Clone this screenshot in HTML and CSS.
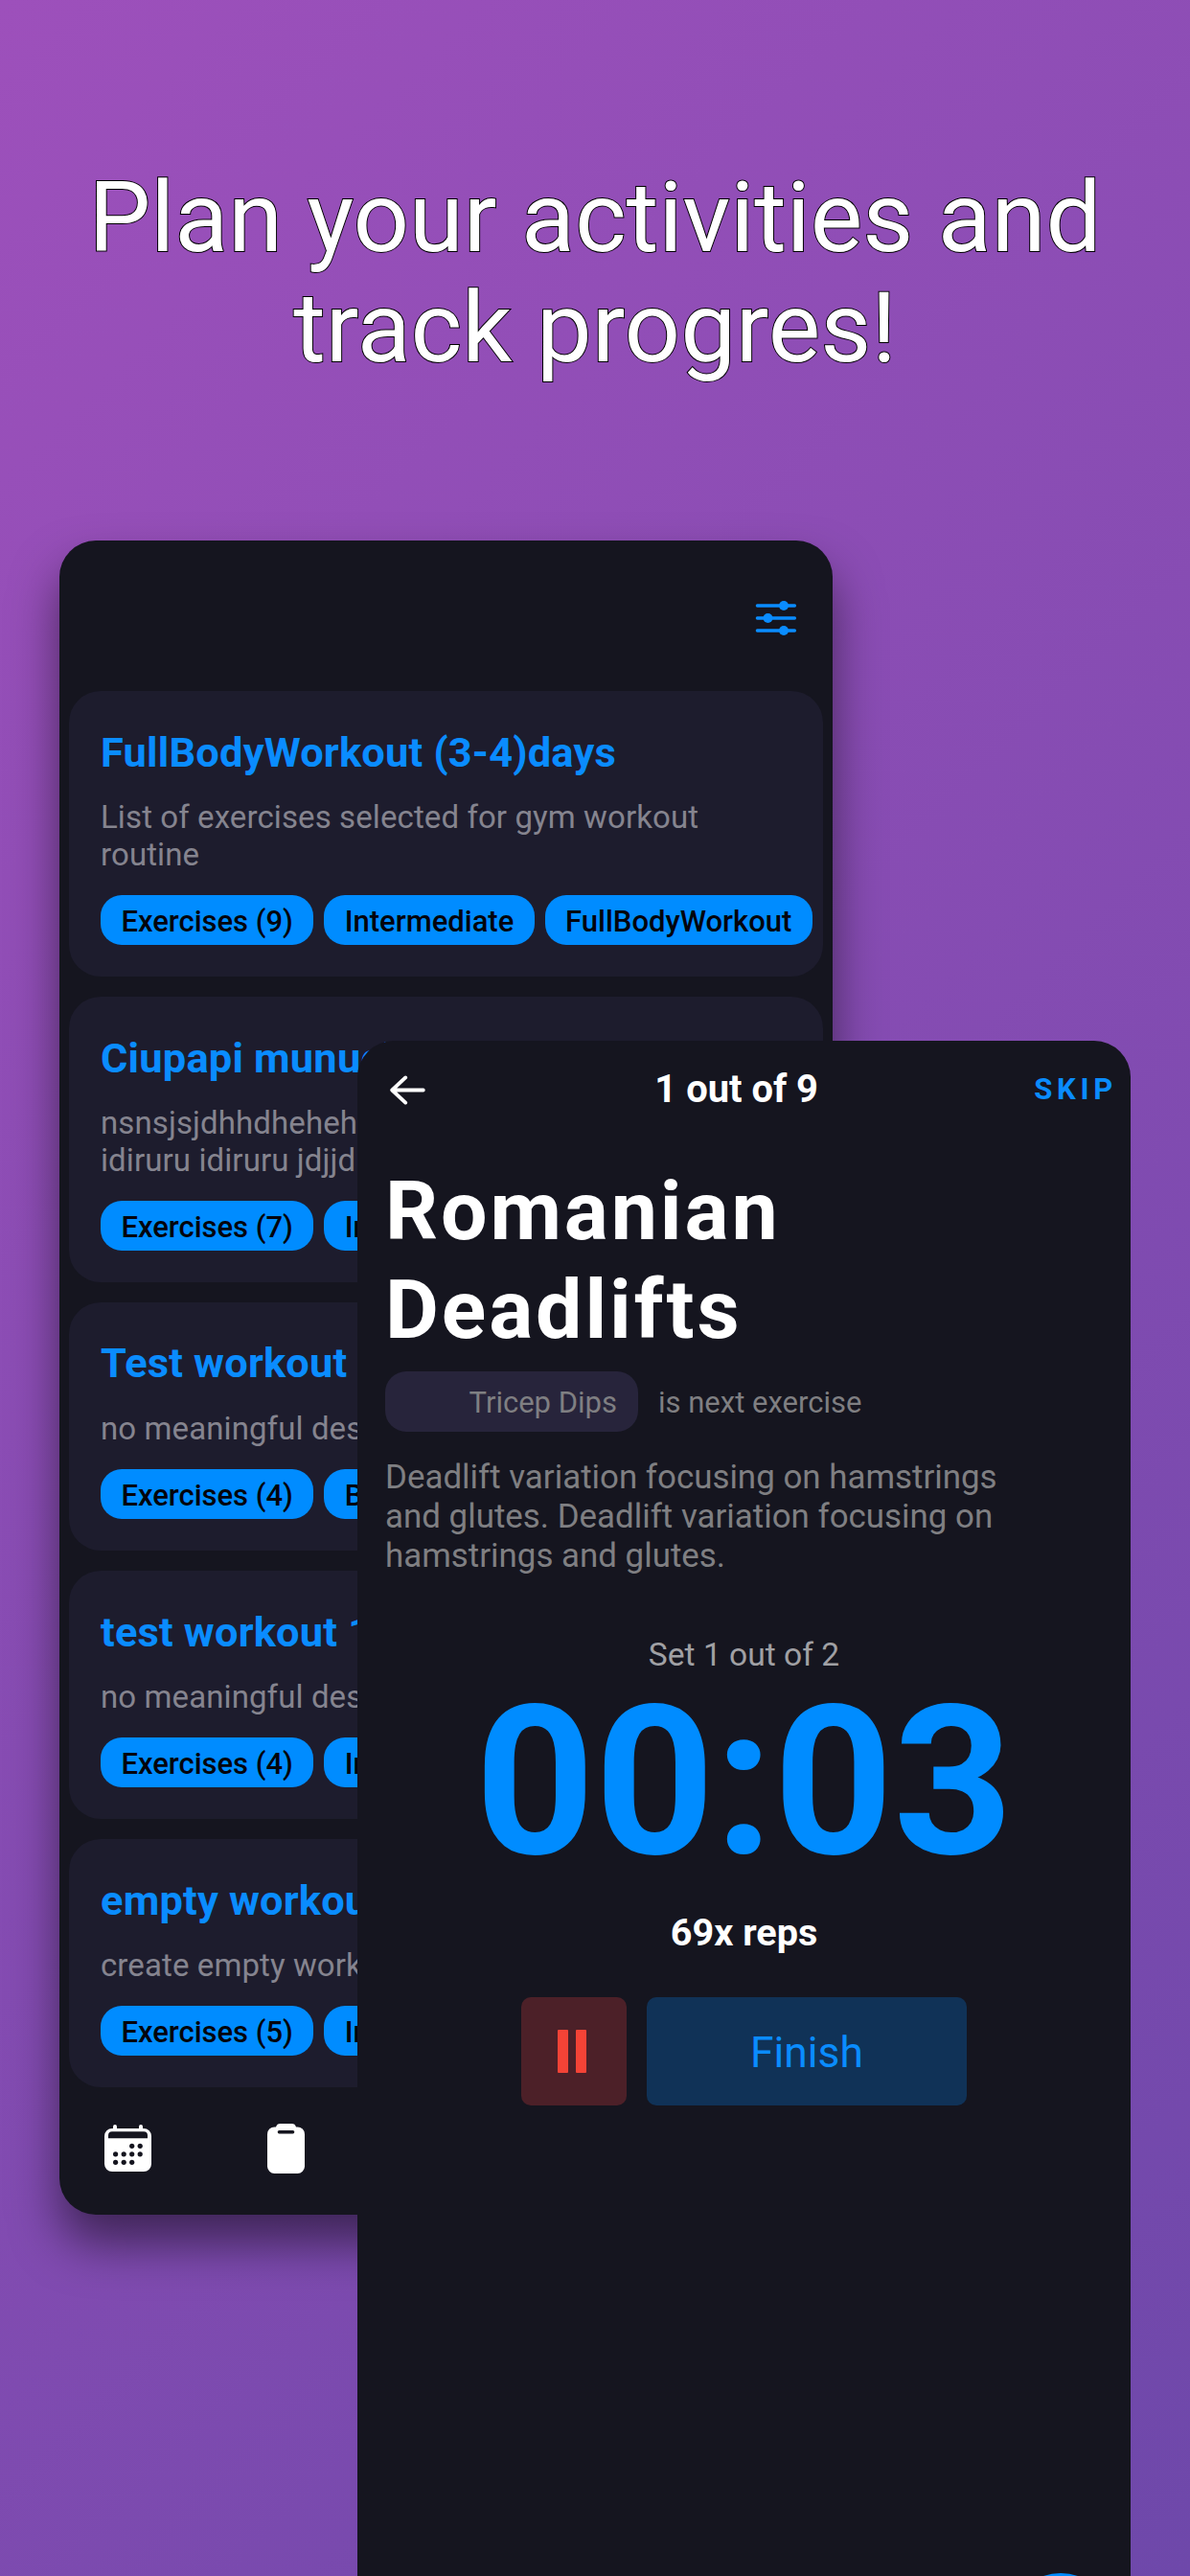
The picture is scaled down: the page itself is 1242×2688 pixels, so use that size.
FILE: index.html
```html
<!DOCTYPE html>
<html lang="en">
<head>
<meta charset="utf-8">
<title>Plan your activities</title>
<link rel="stylesheet" href="styles.css">
</head>
<body>
<main class="stage">
  <h1 class="headline">Plan your activities and<br>track progres!</h1>

  <section class="phone phone-list">
    <header class="list-header">
      <svg class="icon-filter" viewBox="0 0 44 38" fill="#0a8cff" stroke="#0a8cff">
        <path d="M2.4 6H41.4M2.4 19H41.4M2.4 32H41.4" stroke-width="3.4" stroke-linecap="round" fill="none"/>
        <g stroke="none"><circle cx="30" cy="6" r="5"/><circle cx="13.5" cy="19" r="5"/><circle cx="30" cy="32" r="5"/></g>
      </svg>
    </header>
    <div class="cards">
      <article class="card">
        <h2 class="card-title">FullBodyWorkout (3-4)days</h2>
        <p class="card-text">List of exercises selected for gym workout<br>routine</p>
        <div class="chips"><span class="chip">Exercises (9)</span><span class="chip">Intermediate</span><span class="chip">FullBodyWorkout</span></div>
      </article>
      <article class="card">
        <h2 class="card-title">Ciupapi munuch</h2>
        <p class="card-text">nsnsjsjdhhdheheh<br>idiruru idiruru jdjjdu</p>
        <div class="chips"><span class="chip">Exercises (7)</span><span class="chip">In</span></div>
      </article>
      <article class="card">
        <h2 class="card-title">Test workout</h2>
        <p class="card-text">no meaningful des</p>
        <div class="chips"><span class="chip">Exercises (4)</span><span class="chip">Be</span></div>
      </article>
      <article class="card">
        <h2 class="card-title">test workout 1</h2>
        <p class="card-text">no meaningful des</p>
        <div class="chips"><span class="chip">Exercises (4)</span><span class="chip">In</span></div>
      </article>
      <article class="card">
        <h2 class="card-title">empty workou</h2>
        <p class="card-text">create empty work</p>
        <div class="chips"><span class="chip">Exercises (5)</span><span class="chip">In</span></div>
      </article>
    </div>
    <nav class="tabbar">
      <svg class="icon-calendar" viewBox="0 0 49 50">
        <path fill="#fff" d="M9 4V2a2 2 0 0 1 4 0V4H36V2a2 2 0 0 1 4 0V4H41a8 8 0 0 1 8 8V41a8 8 0 0 1-8 8H8a8 8 0 0 1-8-8V12a8 8 0 0 1 8-8z"/>
        <path fill="#15151f" d="M8 7.3H41a4 4 0 0 1 4 4V14.3H4V11.3a4 4 0 0 1 4-4z"/>
        <g fill="#15151f"><circle cx="28.7" cy="22.3" r="2.6"/><circle cx="37.2" cy="22.3" r="2.6"/><circle cx="11.6" cy="30.8" r="2.6"/><circle cx="20.2" cy="30.8" r="2.6"/><circle cx="28.7" cy="30.8" r="2.6"/><circle cx="37.2" cy="30.8" r="2.6"/><circle cx="11.6" cy="39.3" r="2.6"/><circle cx="20.2" cy="39.3" r="2.6"/><circle cx="28.7" cy="39.3" r="2.6"/></g>
      </svg>
      <svg class="icon-clipboard" viewBox="0 0 39 52">
        <path fill="#fff" d="M13.5 0H25.5Q29 0 30 3.4H31.5a7.5 7.5 0 0 1 7.5 7.5V44.5a7.5 7.5 0 0 1-7.5 7.5H7.5A7.5 7.5 0 0 1 0 44.5V10.9A7.5 7.5 0 0 1 7.5 3.4H9Q10 0 13.5 0z"/>
        <path d="M12.4 8.8H26.6" stroke="#15151f" stroke-width="3.4" stroke-linecap="round"/>
      </svg>
    </nav>
  </section>

  <section class="phone phone-session">
    <header class="session-header">
      <svg class="icon-back" viewBox="0 0 37 31" fill="none" stroke="#fff" stroke-width="3.8" stroke-linecap="round" stroke-linejoin="round">
        <path d="M34.8 15.5H2.4M16.2 2.4L2.2 15.5L16.2 28.6"/>
      </svg>
      <span class="session-step">1 out of 9</span>
      <span class="skip">SKIP</span>
    </header>
    <h2 class="exercise-name">Romanian<br>Deadlifts</h2>
    <div class="next"><span class="next-pill">Tricep Dips</span><span class="next-note">is next exercise</span></div>
    <p class="exercise-text">Deadlift variation focusing on hamstrings<br>and glutes. Deadlift variation focusing on<br>hamstrings and glutes.</p>
    <div class="set">Set 1 out of 2</div>
    <div class="timer">00:03</div>
    <div class="reps">69x reps</div>
    <div class="actions">
      <span class="btn btn-pause"><i class="bar"></i><i class="bar"></i></span>
      <span class="btn btn-finish">Finish</span>
    </div>
    <span class="fab"></span>
  </section>
</main>
</body>
</html>
```
FILE: styles.css
```css
* { box-sizing: border-box; }

body {
  margin: 0;
  font-family: Roboto, "Noto Sans", sans-serif;
}

h1, h2, p { margin: 0; }
svg { display: block; flex: none; }

.stage {
  position: relative;
  width: 1242px;
  height: 2688px;
  overflow: hidden;
  background: linear-gradient(135deg, #9d50bb, #6e48aa);
}

.headline {
  padding-top: 170px;
  font-size: 102.8px;
  font-weight: 400;
  line-height: 115px;
  text-align: center;
  color: #fff;
  -webkit-text-stroke: 2px #000;
  paint-order: stroke fill;
}

.phone {
  position: absolute;
  width: 807px;
  height: 1747px;
  border-radius: 38px;
  background: #15151f;
}

.phone-list {
  left: 62px;
  top: 564px;
  display: flex;
  flex-direction: column;
  box-shadow: 0 30px 50px rgba(0, 0, 0, .5);
}

.phone-session {
  left: 373px;
  top: 1086px;
  padding: 0 29px;
  display: flex;
  flex-direction: column;
}

/* Workout list */
.list-header {
  height: 157px;
  padding: 5px 37px 0 0;
  display: flex;
  align-items: center;
  justify-content: flex-end;
}

.icon-filter { width: 44px; height: 38px; }

.cards {
  padding: 0 10px;
  display: flex;
  flex-direction: column;
  gap: 21px;
}

.card {
  padding: 38.7px 0 32.8px 33px;
  border-radius: 33px;
  background: #1d1c2d;
  white-space: nowrap;
}

.card-title {
  font-size: 43.4px;
  font-weight: 700;
  line-height: 52px;
  letter-spacing: .2px;
  color: #0a8cff;
}

.card-text {
  margin: 22.4px 0 22.3px;
  font-size: 33px;
  line-height: 38.7px;
  letter-spacing: .1px;
  color: #85848f;
}

.chips { display: flex; gap: 11px; }

.chip {
  height: 52.3px;
  padding: 0 21.4px;
  border-radius: 22px;
  background: #008cff;
  color: #04040c;
  font-size: 31px;
  font-weight: 500;
  line-height: 56px;
}

.tabbar {
  padding: 39px 0 0 47px;
  display: flex;
  gap: 121px;
}

.icon-calendar { width: 49px; height: 50px; }
.icon-clipboard { width: 39px; height: 52px; margin-top: -1px; }

/* Running exercise */
.session-header {
  height: 101px;
  margin-right: -11px;
  padding-left: 5px;
  display: flex;
  align-items: center;
  justify-content: space-between;
}

.icon-back { width: 37px; height: 31px; margin-top: 1px; }

.session-step {
  margin-left: 14px;
  font-size: 39.9px;
  font-weight: 700;
  color: #fff;
}

.skip {
  margin-right: -4px;
  font-size: 31px;
  font-weight: 700;
  letter-spacing: 4.7px;
  color: #0a8cff;
}

.exercise-name {
  margin-top: 25px;
  font-size: 86px;
  font-weight: 700;
  line-height: 103px;
  letter-spacing: 2.9px;
  color: #fff;
}

.next {
  margin-top: 13px;
  display: flex;
  align-items: center;
  gap: 21px;
  font-size: 31px;
  color: #7f7f82;
}

.next-pill {
  width: 264px;
  height: 63px;
  padding-right: 22px;
  border-radius: 22px;
  background: #27243b;
  line-height: 66px;
  text-align: right;
}

.next-note { line-height: 66px; margin-bottom: -3px; }

.exercise-text {
  margin-top: 27px;
  font-size: 34.9px;
  line-height: 41px;
  color: #7f7f82;
}

.set {
  margin-top: 58px;
  font-size: 33.6px;
  line-height: 50px;
  text-align: center;
  color: #a0a0a4;
}

.timer {
  margin-top: -1px;
  font-size: 218px;
  font-weight: 700;
  line-height: 218px;
  text-align: center;
  color: #008cff;
}

.reps {
  margin-top: 22.5px;
  font-size: 39.6px;
  font-weight: 700;
  line-height: 50px;
  text-align: center;
  color: #fff;
}

.actions {
  margin-top: 42px;
  display: flex;
  justify-content: center;
  gap: 21px;
}

.btn {
  height: 113px;
  border-radius: 10px;
  display: flex;
  align-items: center;
  justify-content: center;
}

.btn-pause { width: 110px; gap: 8px; background: #4c2028; padding-right: 5px; }
.bar { width: 11px; height: 45px; border-radius: 1px; background: #f44336; }

.btn-finish {
  width: 334px;
  background: #103257;
  color: #0a8cff;
  font-size: 44.3px;
  padding-top: 4px;
}

.fab {
  position: absolute;
  right: 18px;
  top: 1599px;
  width: 110px;
  height: 110px;
  border-radius: 50%;
  background: #008cff;
}
```
